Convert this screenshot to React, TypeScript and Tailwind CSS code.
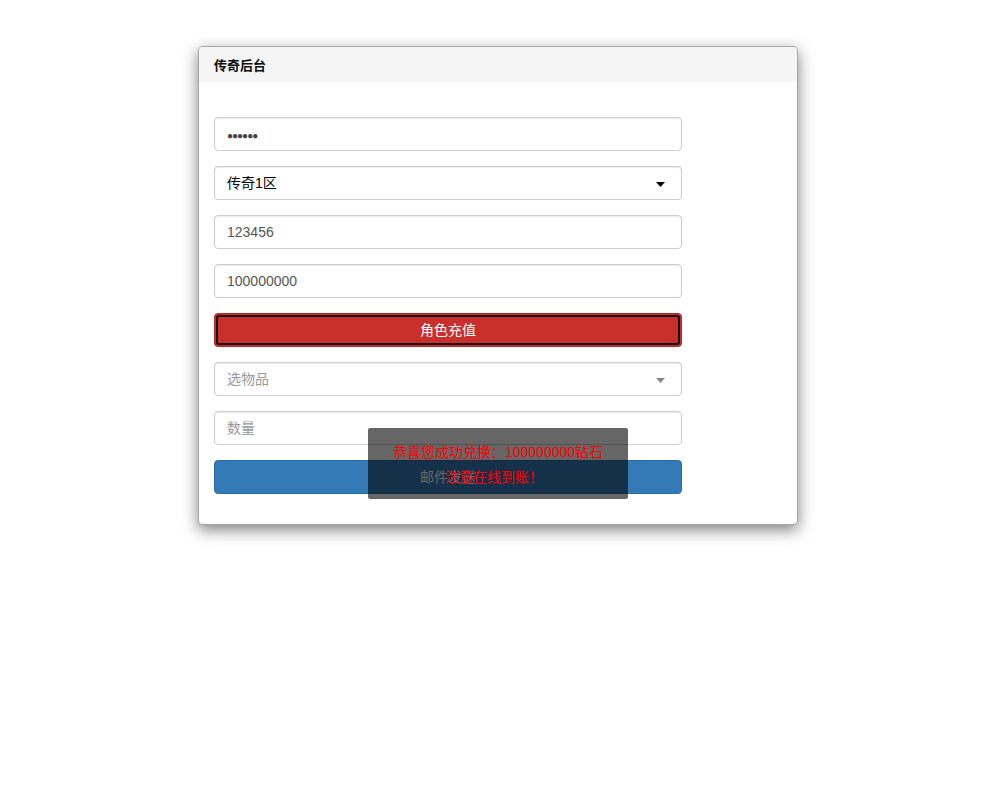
import React from "react";

const font = { fontFamily: '"Liberation Sans", Arial, "Noto Sans CJK SC", sans-serif' };

function Caret({ color }: { color: string }) {
  return (
    <svg width="9" height="5" viewBox="0 0 9 5" className="absolute right-[16px] top-[15px]">
      <path d="M0 0 L9 0 L4.5 5 Z" fill={color} />
    </svg>
  );
}

export default function App() {
  const inputCls =
    "relative h-[34px] w-full rounded-[4px] border border-[#ccc] bg-white px-3 text-[14px] leading-[32px] shadow-[inset_0_1px_1px_rgba(0,0,0,0.075)]";
  return (
    <div className="min-h-[810px] w-full bg-white text-[14px]" style={font}>
      <div className="h-[46px]" />
      <div className="ml-[198px] w-[600px] rounded-[5px] border border-[rgba(0,0,0,0.35)] bg-white shadow-[0_5px_15px_rgba(0,0,0,0.5)]">
        <div className="h-[35px] rounded-t-[4px] bg-[#f5f5f5] px-[15px] text-[13px] font-bold leading-[37px] text-[#111]">
          传奇后台
        </div>
        <div className="relative px-[15px] pt-[35px] pb-[30px]">
          <div className="flex w-[468px] flex-col gap-[15px]">
            <div className={inputCls + " text-[#444]"}>
              <span className="tracking-[-1px] text-[10px]">●●●●●●</span>
            </div>
            <div className={inputCls + " text-[#000]"}>
              传奇1区
              <Caret color="#000" />
            </div>
            <div className={inputCls + " text-[#555]"}>123456</div>
            <div className={inputCls + " text-[#555]"}>100000000</div>
            <div className="flex h-[34px] w-full items-center justify-center rounded-[4px] border border-[#ac2925] bg-[#c9302c] p-[1px]">
              <div className="flex h-full w-full items-center justify-center rounded-[3px] border-2 border-[#111] text-[14px] text-white">
                角色充值
              </div>
            </div>
            <div className={inputCls + " text-[#999]"}>
              选物品
              <Caret color="#888" />
            </div>
            <div className={inputCls + " text-[#999]"}>数量</div>
            <div className="flex h-[34px] w-full items-center justify-center rounded-[4px] border border-[#2e6da4] bg-[#337ab7] text-[14px] text-white">
              邮件发送
            </div>
          </div>
          <div className="absolute left-[169px] top-[346px] flex h-[71px] w-[260px] flex-col items-center justify-center rounded-[2px] bg-[rgba(0,0,0,0.6)] pt-[3px] text-[14px] leading-[25px] text-[#ff0000]">
            <div>恭喜您成功兑换：100000000钻石</div>
            <div className="pr-[8px]">注意在线到账！</div>
          </div>
        </div>
      </div>
    </div>
  );
}
